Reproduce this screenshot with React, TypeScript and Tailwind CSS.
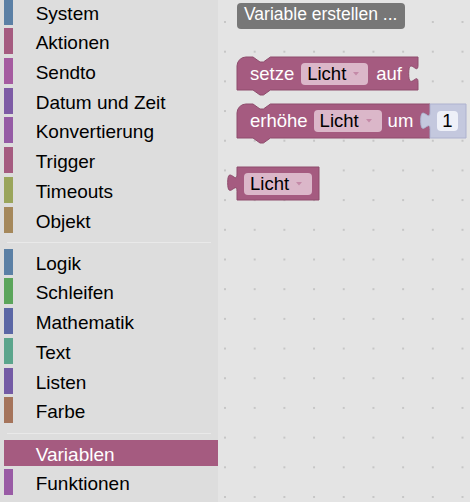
import React from 'react'

type Category = { name: string; color: string; selected?: boolean }

const groups: Category[][] = [
  [
    { name: 'System', color: '#5b80a5' },
    { name: 'Aktionen', color: '#a55b80' },
    { name: 'Sendto', color: '#a55ba0' },
    { name: 'Datum und Zeit', color: '#7d5ba5' },
    { name: 'Konvertierung', color: '#955ba5' },
    { name: 'Trigger', color: '#a55b80' },
    { name: 'Timeouts', color: '#9aa55b' },
    { name: 'Objekt', color: '#a5885b' },
  ],
  [
    { name: 'Logik', color: '#5b80a5' },
    { name: 'Schleifen', color: '#5ba55b' },
    { name: 'Mathematik', color: '#5b67a5' },
    { name: 'Text', color: '#5ba58c' },
    { name: 'Listen', color: '#745ba5' },
    { name: 'Farbe', color: '#a5745b' },
  ],
  [
    { name: 'Variablen', color: '#a55b80', selected: true },
    { name: 'Funktionen', color: '#995ba5' },
  ],
]

const TAB_DOWN = 'c 0,11.6 -9.3,-9.3 -9.3,8.7 s 9.3,-2.9 9.3,8.7'
const TAB_UP = 'c 0,-11.6 -9.3,9.3 -9.3,-8.7 s 9.3,2.9 9.3,-8.7'

function statementPath(w: number, h: number) {
  return `M 0,9 A 9,9 0 0 1 9,0 H 16 l 7,5 h 3.4 l 7,-5 H ${w} V 8 ${TAB_DOWN} V ${h} H 33.4 l -7,5 h -3.4 l -7,-5 H 0 Z`
}

function CategoryRow({ cat }: { cat: Category }) {
  return (
    <div className="flex h-[29.7px] items-start pl-[4px]">
      <div className={`flex h-[26px] flex-1 items-start ${cat.selected ? 'bg-[#a55b80]' : ''}`}>
        <div className="h-full w-[9px]" style={{ backgroundColor: cat.color }} />
        <span
          className={`ml-[22.7px] whitespace-nowrap text-[19px] leading-[29.7px] ${
            cat.selected ? 'text-white' : 'text-black'
          }`}
        >
          {cat.name}
        </span>
      </div>
    </div>
  )
}

function Dropdown({ width }: { width: number }) {
  return (
    <div
      className="flex h-[22px] items-center rounded-[4px] bg-[#dbb7c9] pl-[6px] text-black"
      style={{ width }}
    >
      <span>Licht</span>
      <svg width="6" height="4" viewBox="0 0 6 4" className="ml-[7px]">
        <path d="M0,0 H6 L3,3.5 Z" fill="#c48aa8" />
      </svg>
    </div>
  )
}

function Shape({ d, w, h, fill, stroke }: { d: string; w: number; h: number; fill: string; stroke: string }) {
  return (
    <svg className="absolute left-0 top-0 overflow-visible" width={w} height={h}>
      <path d={d} fill={fill} stroke={stroke} strokeWidth="1" />
    </svg>
  )
}

export default function App() {
  return (
    <div className="flex h-[502px] w-[470px] overflow-hidden font-['Liberation_Sans',Arial,sans-serif]">
      {/* Toolbox */}
      <div className="w-[218px] shrink-0 bg-[#dddddd]">
        <div className="-mt-[1.3px]">
          {groups.map((group, gi) => (
            <div key={gi}>
              {gi > 0 && (
                <div className="flex h-[12.6px] items-center px-[7px]">
                  <div className="h-px w-full bg-[#e9e9e9]" />
                </div>
              )}
              {group.map((cat) => (
                <CategoryRow key={cat.name} cat={cat} />
              ))}
            </div>
          ))}
        </div>
      </div>

      {/* Flyout / workspace */}
      <div className="flex flex-1 flex-col items-start bg-[#e4e4e4] bg-[radial-gradient(circle,#c6c6c6_1px,transparent_1.5px)] bg-[size:29.7px_29.7px] bg-[position:-7.85px_7.15px] pl-[19px] text-[18.5px]">
        <div className="mt-[3px] h-[26px] w-[168px] rounded-[4px] bg-[#777777] pl-[7px] text-[17.5px] leading-[22px] text-white">
          Variable erstellen ...
        </div>

        {/* setze Licht auf */}
        <div className="relative mt-[28px] h-[33px] w-[181px]">
          <Shape d={statementPath(181, 33)} w={181} h={33} fill="#a55b80" stroke="#8e4c6c" />
          <div className="relative flex h-full items-center pl-[13px] text-white">
            <span>setze</span>
            <div className="ml-[7px]">
              <Dropdown width={67} />
            </div>
            <span className="ml-[8px]">auf</span>
          </div>
        </div>

        {/* erhöhe Licht um 1 */}
        <div className="relative mt-[14px] h-[34px] w-[229px]">
          <Shape d={statementPath(193, 34)} w={193} h={34} fill="#a55b80" stroke="#8e4c6c" />
          <Shape
            d={`M 193,0 H 229 V 34 H 193 V 25.4 ${TAB_UP} Z`}
            w={229}
            h={34}
            fill="#c4c8de"
            stroke="#aeb2cf"
          />
          <div className="relative flex h-full items-center pl-[13px] text-white">
            <span>erhöhe</span>
            <div className="ml-[6px]">
              <Dropdown width={68} />
            </div>
            <span className="ml-[6px]">um</span>
          </div>
          <div className="absolute left-[200px] top-[7px] flex h-[20px] w-[21px] items-center justify-center rounded-[4px] bg-[#eef0f8] text-black">
            1
          </div>
        </div>

        {/* Licht getter */}
        <div className="relative mt-[29px] h-[33px] w-[82px]">
          <Shape d={`M 0,0 H 82 V 33 H 0 V 24.4 ${TAB_UP} Z`} w={82} h={33} fill="#a55b80" stroke="#8e4c6c" />
          <div className="relative flex h-full items-center pl-[7px]">
            <Dropdown width={68} />
          </div>
        </div>
      </div>
    </div>
  )
}
